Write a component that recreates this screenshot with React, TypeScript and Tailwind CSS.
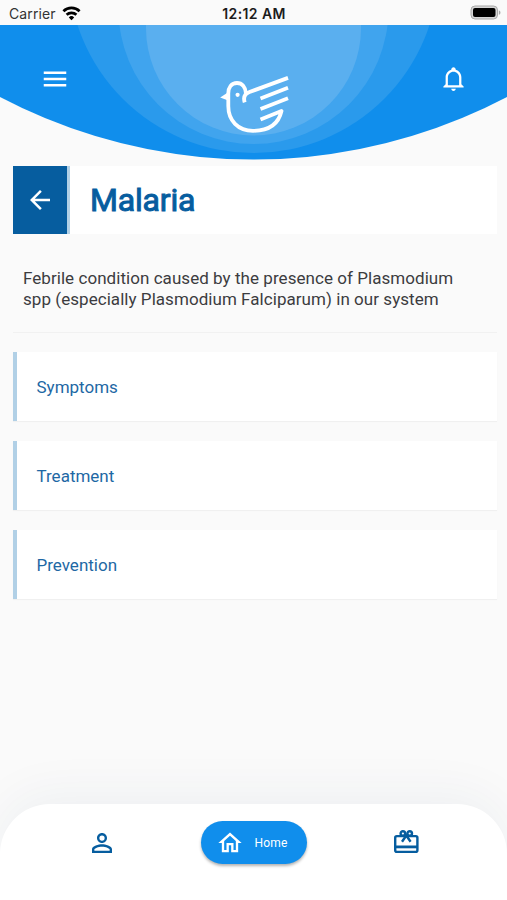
import type { ReactNode } from "react";
import { MdArrowBack, MdMenu, MdOutlineHome, MdPersonOutline } from "react-icons/md";

interface Section {
  id: string;
  title: string;
}

const sections: Section[] = [
  { id: "symptoms", title: "Symptoms" },
  { id: "treatment", title: "Treatment" },
  { id: "prevention", title: "Prevention" },
];

function StatusBar() {
  return (
    <div className="grid h-[25px] grid-cols-3 items-center bg-[#fafafa] pt-[3px] pr-[6px] pl-[9px] font-['Inter','Liberation_Sans',sans-serif] leading-none text-[#1c1c1c]">
      <div className="flex items-center gap-[6px]">
        <span className="text-[14px] tracking-[0.1px] text-[#333]">Carrier</span>
        <svg width="19" height="15" viewBox="0 0 19 15" fill="none" stroke="#000" strokeWidth="2.7" className="-mt-[2px]">
          <path d="M1.4 5.2a11.6 11.6 0 0 1 16.2 0" />
          <path d="M4.6 8.8a7 7 0 0 1 9.8 0" />
          <path d="M9.5 14.2 6.8 11.4a3.9 3.9 0 0 1 5.4 0z" fill="#000" stroke="none" />
        </svg>
      </div>
      <div className="-ml-[2px] text-center text-[14px] font-semibold tracking-[0.4px] whitespace-nowrap">12:12 AM</div>
      <div className="flex justify-end">
        <svg width="31" height="15" viewBox="0 0 31 15" className="-mt-[3px]">
          <rect x="1" y="1" width="26.5" height="13" rx="4" fill="#d6d6d6" stroke="#a9a9a9" />
          <rect x="3" y="3" width="22.5" height="9" rx="2" fill="#000" />
          <path d="M28.8 5.2c2.2.8 2.2 3.8 0 4.6z" fill="#a9a9a9" />
        </svg>
      </div>
    </div>
  );
}

function BirdLogo() {
  return (
    <svg width="70" height="58" viewBox="0 0 70 58" fill="none" stroke="#fff" strokeWidth="3.8" strokeLinejoin="round">
      <path d="M24.7 26.3C23 21 25.3 17.6 29.5 16L68 1.9" />
      <path d="M26 17.5C25.500 10.800 22 7 17 7 11.500 7 8.300 11.500 8.300 17.500V30C8.300 44.500 18 54.800 33 54.800 48.500 54.800 58.500 48 61.500 35L40.500 43.400" />
      <path d="M40.5 22.5 68 11.7" />
      <path d="M40.5 33 68 22.2" />
      <path d="M8.2 16.2 0.2 21.600l8 3z" fill="#fff" stroke="none" />
      <circle cx="17.6" cy="18.8" r="2.1" fill="#fff" stroke="none" />
    </svg>
  );
}

function BellIcon() {
  return (
    <svg width="27" height="27" viewBox="0 0 24 24" fill="currentColor">
      <path d="M10 21H14C14 22.1 13.1 23 12 23S10 22.1 10 21M21 19V20H3V19L5 17V11C5 7.9 7 5.2 10 4.3V4C10 2.9 10.9 2 12 2S14 2.9 14 4V4.3C17 5.2 19 7.9 19 11V17L21 19M17 11C17 8.2 14.8 6 12 6S7 8.2 7 11V18H17V11Z" />
    </svg>
  );
}

function GiftIcon() {
  return (
    <svg width="26" height="26" viewBox="0 0 26 26" fill="none" stroke="currentColor" strokeWidth="2.4">
      <rect x="2.2" y="7.1" width="22.2" height="15.8" rx="1.6" />
      <path d="M2.2 17.900H24.400" strokeWidth="2.800" />
      <circle cx="9.9" cy="4.5" r="2.300" />
      <circle cx="16.7" cy="4.5" r="2.300" />
      <path d="M9 12.800 13.300 6.500 17.600 12.800" />
    </svg>
  );
}

function Header() {
  return (
    <header className="relative h-[141px] overflow-hidden">
      <svg className="absolute inset-0" width="507" height="141" viewBox="0 25 507 141">
        <clipPath id="dome">
          <circle cx="253.5" cy="-385.5" r="545" />
        </clipPath>
        <g clipPath="url(#dome)">
          <rect y="25" width="507" height="141" fill="#108eec" />
          <circle cx="253.5" cy="-32" r="185" fill="#2a9aec" />
          <circle cx="253.5" cy="9" r="135" fill="#40a4ee" />
          <circle cx="253.5" cy="28" r="107.5" fill="#5aafef" />
        </g>
      </svg>
      <div className="relative flex items-start justify-between pr-10 pl-10 text-white">
        <button className="mt-[39px]" aria-label="Menu">
          <MdMenu size={30} />
        </button>
        <div className="mt-[51px] -ml-px">
          <BirdLogo />
        </div>
        <button className="mt-10" aria-label="Notifications">
          <BellIcon />
        </button>
      </div>
    </header>
  );
}

function SectionCard({ title }: { title: string }) {
  return (
    <button className="flex h-[69px] w-full items-center border-l-4 border-[#b1d0e6] bg-white pt-[2px] pl-[19.5px] text-left text-[17px] text-[#1e68a4] shadow-[0_1px_1px_rgba(0,0,0,0.04)]">
      {title}
    </button>
  );
}

function NavItem({ children, label }: { children: ReactNode; label: string }) {
  return (
    <button className="flex w-[61px] justify-center text-[#065d9f]" aria-label={label}>
      {children}
    </button>
  );
}

function BottomNav() {
  return (
    <nav className="flex h-24 items-start justify-between rounded-t-[50px] bg-white px-[71px] pt-[17px] shadow-[0_-10px_50px_rgba(20,50,90,0.05)]">
      <div className="flex h-11 items-center">
        <NavItem label="Profile">
          <MdPersonOutline size={30} />
        </NavItem>
      </div>
      <button className="flex h-[43px] w-[106px] items-center gap-[11px] rounded-full bg-[#108eec] pl-[15px] text-[12px] tracking-[0.2px] text-white shadow-[0_2px_3px_rgba(0,0,0,0.3)]">
        <MdOutlineHome size={28} />
        Home
      </button>
      <div className="flex h-[42px] items-center">
        <NavItem label="Rewards">
          <GiftIcon />
        </NavItem>
      </div>
    </nav>
  );
}

export default function App() {
  return (
    <div className="flex h-[900px] w-[507px] flex-col overflow-hidden bg-[#fafafa] font-['Roboto','Liberation_Sans',sans-serif]">
      <StatusBar />
      <Header />
      <main className="flex-1 pr-[10px] pl-[13px]">
        <div className="flex h-[68px] bg-white">
          <button className="flex w-[57px] items-center justify-center border-r-[3px] border-[#b1d0e6] bg-[#065d9f] text-white" aria-label="Back">
            <MdArrowBack size={30} />
          </button>
          <h1 className="flex items-center pb-px pl-5 text-[32px] font-normal tracking-[-0.2px] text-[#065d9f] [-webkit-text-stroke:1px_#065d9f]">
            Malaria
          </h1>
        </div>
        <p className="mt-[34px] border-b border-[#f1f1f1] pb-[22px] pl-[10px] text-[17px] leading-[21px] tracking-[0.05px] text-[#3c3c3f]">
          Febrile condition caused by the presence of Plasmodium
          <br />
          spp (especially Plasmodium Falciparum) in our system
        </p>
        <div className="mt-[19px] flex flex-col gap-5">
          {sections.map((section) => (
            <SectionCard key={section.id} title={section.title} />
          ))}
        </div>
      </main>
      <BottomNav />
    </div>
  );
}
